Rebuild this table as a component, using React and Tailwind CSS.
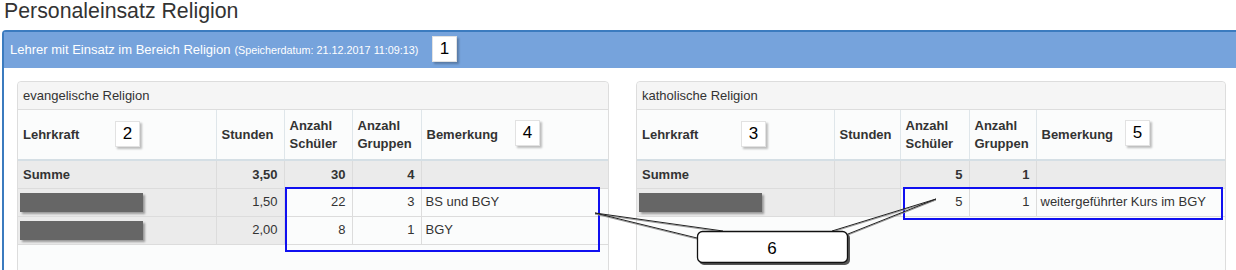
const left = {
  title: "evangelische Religion",
  cols: [198, 68, 68, 69, 187],
  summe: ["3,50", "30", "4"],
  rows: [
    ["1,50", "22", "3", "BS und BGY"],
    ["2,00", "8", "1", "BGY"],
  ],
};

const right = {
  title: "katholische Religion",
  cols: [197, 66, 69, 67, 189],
  summe: ["", "5", "1"],
  rows: [["", "5", "1", "weitergeführter Kurs im BGY"]],
};

const Redacted = () => (
  <div className="h-[19px] w-[123px] bg-[#666] shadow-[2px_2px_2px_rgba(0,0,0,0.35)]" />
);

const Tag = ({ n, className }) => (
  <div
    className={
      "absolute flex h-[26px] w-[25px] items-center justify-center border border-[#e2e2e2] bg-white text-[17px] text-black shadow-[2px_2px_2px_rgba(0,0,0,0.25)] " +
      className
    }
  >
    {n}
  </div>
);

const Panel = ({ data, width }) => {
  const th = "border-r border-[#dfe6ea] px-[5px] text-left align-middle font-bold";
  const gray = "bg-[#ebebeb]";
  return (
    <div className={`h-[220px] rounded-[4px] border border-[#dddddd] bg-[#fbfcfc] ${width}`}>
      <div className="flex h-[28px] items-center rounded-t-[4px] border-b border-[#dddddd] bg-[#f5f5f5] px-[5px] text-[13px]">
        {data.title}
      </div>
      <table className="table-fixed border-collapse text-[13px]">
        <colgroup>
          {data.cols.map((w, i) => (
            <col key={i} style={{ width: w }} />
          ))}
        </colgroup>
        <thead>
          <tr className="h-[50px] border-b-2 border-[#d5dfe5] leading-[18px]">
            <th className={th}>Lehrkraft</th>
            <th className={th}>Stunden</th>
            <th className={th}>
              Anzahl
              <br />
              Schüler
            </th>
            <th className={th}>
              Anzahl
              <br />
              Gruppen
            </th>
            <th className="px-[5px] text-left align-middle font-bold">Bemerkung</th>
          </tr>
        </thead>
        <tbody>
          <tr className={`h-[28px] border-b border-[#dcdcdc] font-bold ${gray}`}>
            <td className="border-r border-[#dcdcdc] px-[5px]">Summe</td>
            {data.summe.map((v, i) => (
              <td key={i} className="border-r border-[#dcdcdc] px-[6px] text-right">
                {v}
              </td>
            ))}
            <td />
          </tr>
          {data.rows.map((r, idx) => (
            <tr key={idx} className="h-[28px] border-b border-[#dcdcdc]">
              <td className={`border-r border-[#dcdcdc] px-[2px] ${gray}`}>
                <Redacted />
              </td>
              <td className={`border-r border-[#dcdcdc] px-[6px] text-right ${gray}`}>{r[0]}</td>
              <td className="border-r border-[#dcdcdc] px-[6px] text-right">{r[1]}</td>
              <td className="border-r border-[#dcdcdc] px-[6px] text-right">{r[2]}</td>
              <td className="px-[4px]">{r[3]}</td>
            </tr>
          ))}
        </tbody>
      </table>
    </div>
  );
};

const Callout = () => (
  <svg className="pointer-events-none absolute left-0 top-0" width="1236" height="270">
    {/* left wedge */}
    <line x1="595" y1="214" x2="697" y2="239" stroke="#999" strokeWidth="1" />
    <line x1="595" y1="214" x2="723" y2="232" stroke="#999" strokeWidth="1" />
    <line x1="595" y1="213" x2="697" y2="238" stroke="#222" strokeWidth="1" />
    <line x1="595" y1="213" x2="723" y2="231" stroke="#222" strokeWidth="1" />
    {/* right wedge */}
    <line x1="936" y1="200" x2="832" y2="232" stroke="#999" strokeWidth="1" />
    <line x1="936" y1="200" x2="848" y2="235" stroke="#999" strokeWidth="1" />
    <line x1="936" y1="199" x2="832" y2="231" stroke="#222" strokeWidth="1" />
    <line x1="936" y1="199" x2="848" y2="234" stroke="#222" strokeWidth="1" />
    <rect x="699" y="233" width="151" height="32" rx="5" fill="#555" />
    <rect x="697.5" y="231.5" width="150" height="31" rx="5" fill="#fff" stroke="#111" strokeWidth="1.3" />
    <text x="772" y="254" textAnchor="middle" fontSize="17" fontFamily="Liberation Sans, Arial, sans-serif" fill="#000">
      6
    </text>
  </svg>
);

export default function App() {
  return (
    <div className="relative h-[270px] w-[1236px] overflow-hidden bg-white font-['Liberation_Sans',Arial,sans-serif] text-[#333]">
      <h1 className="h-[30px] pl-[4px] text-[21.3px] leading-[22px]">Personaleinsatz Religion</h1>
      <div className="ml-[2px] w-[1260px] rounded-tl-[4px] border-l-2 border-t-2 border-[#3b7bbf]">
        <div className="flex h-[36px] items-center bg-[#76a3dc] pl-[6px] text-white">
          <span className="text-[13px]">Lehrer mit Einsatz im Bereich Religion</span>
          <span className="ml-[4px] text-[10.8px]">(Speicherdatum: 21.12.2017 11:09:13)</span>
        </div>
        <div className="flex gap-[27px] pl-[13px] pt-[13px]">
          <Panel data={left} width="w-[592px]" />
          <Panel data={right} width="w-[590px]" />
        </div>
      </div>

      <Tag n="1" className="left-[432px] top-[36px]" />
      <Tag n="2" className="left-[115px] top-[121px]" />
      <Tag n="4" className="left-[515px] top-[120px]" />
      <Tag n="3" className="left-[741px] top-[121px]" />
      <Tag n="5" className="left-[1125px] top-[120px]" />

      <div className="pointer-events-none absolute left-[285px] top-[187px] h-[65px] w-[315px] border-2 border-[#1010f0]" />
      <div className="pointer-events-none absolute left-[903px] top-[187px] h-[33px] w-[320px] border-2 border-[#1010f0]" />

      <Callout />
    </div>
  );
}
